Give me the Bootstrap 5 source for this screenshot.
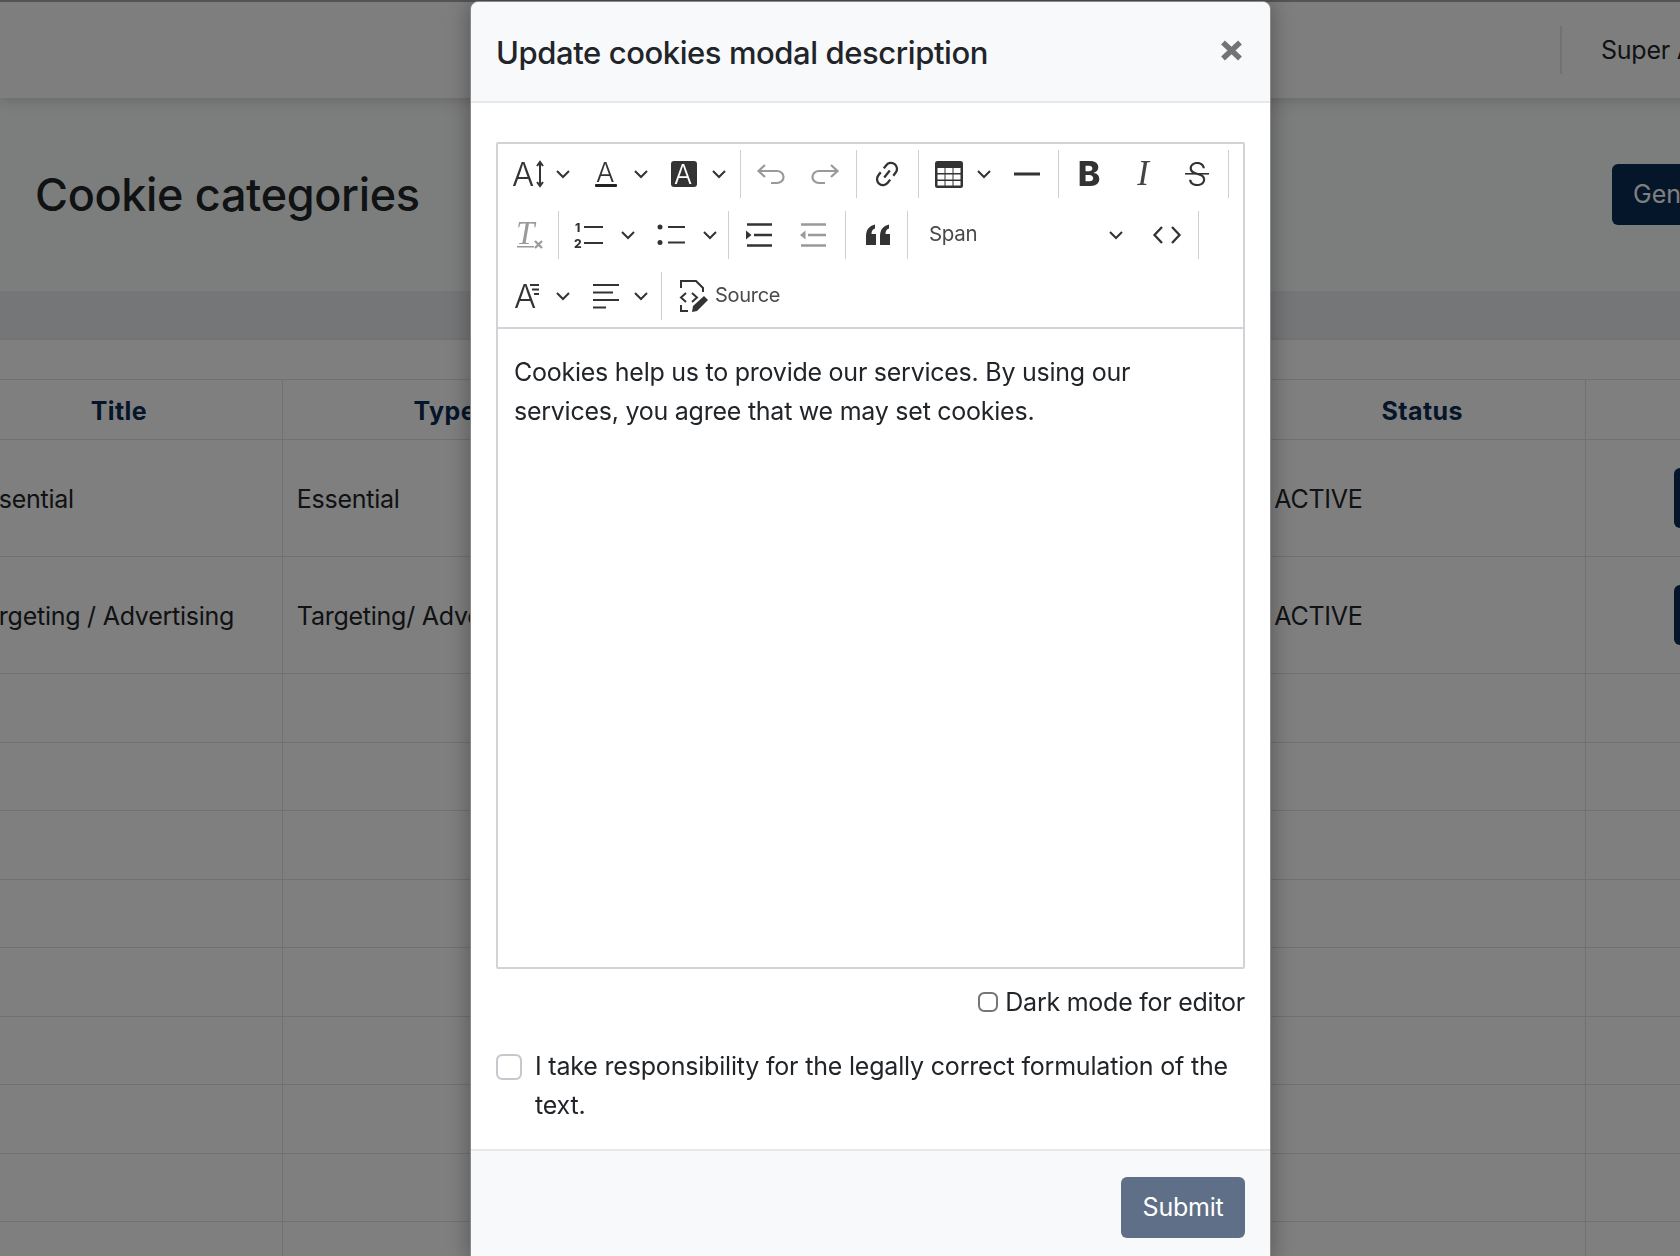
<!DOCTYPE html>
<html lang="en">
<head>
    <meta charset="UTF-8">
    <meta name="viewport" content="width=device-width, initial-scale=1.0">
    <title>Cookie categories</title>
    <link href="https://cdn.jsdelivr.net/npm/bootstrap@5.3.0/dist/css/bootstrap.min.css" rel="stylesheet">
    <style>
        html, body { height: 1256px; overflow: hidden; }
        body { font-family: "Inter", sans-serif; font-size: 25px; letter-spacing: -.25px; line-height: 38.5px; color: #212529; }

        /* page behind the modal */
        .page-wrap { width: 1960px; }
        .top-bar { height: 98px; background: #fcfdfd; border-top: 2px solid #a8a8a8; box-shadow: 0 2px 14px rgba(0,0,0,.18); position: relative; padding-right: 199px; }
        .top-line { border-left: 2px solid #e3e5e7; height: 48px; margin-right: 39px; }
        .user-name { width: 160px; }
        .page-head { height: 193px; background: #f9fafa; padding-left: 35px; padding-right: 108px; }
        .page-head h1 { font-size: 45px; font-weight: 500; margin: 0; line-height: 1.2; letter-spacing: -.35px; }
        .btn-gen { background: #0a2a54; color: #fff; font-size: 25px; height: 61px; padding: 0 0 0 21px; width: 240px; border-radius: 6px; border: 0; text-align: left; }
        .page-band { height: 49px; background: #ebecf0; border-bottom: 2px solid #e4e5e8; }
        .table-wrap { padding-top: 39px; margin-left: -44px; }
        .cat-table { table-layout: fixed; width: 1956px; font-size: 25px; margin: 0; }
        .cat-table th, .cat-table td { padding: 0 15px 0 14px; vertical-align: middle; border-color: #dee2e6; }
        .cat-table th { height: 60px; padding-top: 4px; color: #0a2a54; text-align: center; font-weight: 700; letter-spacing: .4px; }
        .cat-table .row-full td { height: 117px; padding-top: 3px; }
        .cat-table .row-empty td { height: 68.5px; }
        .btn-row { background: #0a2a54; width: 148px; height: 60px; border: 0; border-radius: 6px; margin-top: 6px; }

        /* modal */
        .cookie-dialog { max-width: none; width: 801px; margin: 1px 0 0 470px; }
        .cookie-dialog .modal-content { border: 1px solid #8a8a8a; border-radius: 8px 8px 0 0; box-shadow: 0 0 24px rgba(0,0,0,.35); }
        .cookie-dialog .modal-header { height: 101px; padding: 2px 25px 0; background: #f8f9fa; border-bottom: 2px solid #e6e8ea; }
        .cookie-dialog .modal-title { font-size: 31px; font-weight: 500; line-height: 1.2; letter-spacing: -.42px; }
        .close-x { width: 23px; height: 21px; background: none; border: 0; padding: 0; margin: -4px 2px 0 auto; line-height: 0; }
        .cookie-dialog .modal-body { padding: 39px 25px 0; }
        .cookie-dialog .modal-footer { height: 113px; align-items: flex-start; padding: 26px 25px 25px; background: #f8f9fa; border-top: 2px solid #e6e8ea; }
        .btn-submit { background: #5f6f87; border: 0; color: #fff; font-size: 25px; letter-spacing: -.25px; width: 124px; height: 61px; border-radius: 6px; margin: 0; padding: 0; }

        /* editor */
        .editor-box { border: 2px solid #d2d3d6; border-radius: 2px; height: 827px; }
        .tb { border-bottom: 2px solid #d2d3d6; height: 186px; padding-left: 2px; }
        .tb-row { height: 61px; }
        .tb-row-first { margin-top: -1px; }
        .tb-btn { width: 54px; height: 48px; flex: none; }
        .tb-caret { width: 16px; height: 48px; flex: none; }
        .tb-caret-w { width: 24px; height: 48px; flex: none; }
        .tb-sep { width: 1px; height: 48px; background: #cfcfd2; flex: none; margin: 0 3px 0 4px; }
        .tb-sep-l { margin-left: 5px; }
        .tb-sep-m { margin-left: 6px; }
        .tb-sep-xl { margin-left: 13px; }
        .tb-sep-src { margin-left: 12px; }
        .tb-start { padding-left: 1px; }
        .tb-span { width: 229px; padding-left: 18px; padding-right: 16px; font-size: 20.5px; letter-spacing: -.3px; color: #4a4a4a; height: 48px; flex: none; }
        .tb-src { font-size: 20px; letter-spacing: -.3px; color: #4a4a4a; gap: 5px; padding-left: 13px; height: 48px; }
        .tb svg text { font-family: "Inter", sans-serif; letter-spacing: 0; }
        .editor-text { height: 637px; padding: 24px 16px 0; }

        .dark-check { height: 68px; padding-bottom: 2px; gap: 7px; }
        .dark-check input { width: 20px; height: 20px; margin: 0; border: 2px solid #767676; border-radius: 4px; }
        .legal-check { margin-top: 10px; gap: 13px; }
        .legal-check input { width: 26px; height: 26px; flex: none; margin: 7px 0 0; border: 2px solid #c5c9ce; border-radius: 6px; }
        .legal-check label { line-height: 38.5px; letter-spacing: -.19px; }
        .legal-wrap { height: 102px; }
    </style>
</head>
<body>
    <div class="page-wrap">
        <div class="top-bar d-flex align-items-center justify-content-end">
            <div class="top-line"></div>
            <div class="user-name text-nowrap">Super Admin</div>
        </div>
        <div class="page-head d-flex align-items-center justify-content-between">
            <h1>Cookie categories</h1>
            <button class="btn-gen text-nowrap">Generate</button>
        </div>
        <div class="page-band"></div>
        <div class="table-wrap">
            <table class="table table-bordered cat-table">
                <thead>
                    <tr><th>Title</th><th>Type</th><th></th><th></th><th>Status</th><th></th></tr>
                </thead>
                <tbody id="cat-rows"></tbody>
            </table>
        </div>
    </div>

    <div class="modal-backdrop show"></div>

    <div class="modal d-block">
        <div class="modal-dialog cookie-dialog">
            <div class="modal-content">
                <div class="modal-header">
                    <h5 class="modal-title">Update cookies modal description</h5>
                    <button type="button" class="close-x" aria-label="Close">
                        <svg width="23" height="21" viewBox="0 0 23 21"><path d="M3 2.5 20 18.5M20 2.5 3 18.5" stroke="#737373" stroke-width="5.5" fill="none"/></svg>
                    </button>
                </div>
                <div class="modal-body">
                    <div class="editor-box">
                        <div class="tb">
                            <!-- row 1 -->
                            <div class="tb-row tb-row-first d-flex align-items-center tb-start">
                                <span class="tb-btn d-flex align-items-center justify-content-center">
                                    <svg width="34" height="34" viewBox="0 0 34 34"><text x="1" y="29" font-size="33" font-weight="300" fill="#333">A</text><path d="M29 6V28M26 9l3-4 3 4M26 25l3 4 3-4" stroke="#333" stroke-width="2" fill="none"/></svg>
                                </span>
                                <span class="tb-caret d-flex align-items-center justify-content-center"><svg width="16" height="10" viewBox="0 0 16 10"><path d="M2 2l6 6 6-6" stroke="#333" stroke-width="2" fill="none"/></svg></span>
                                <span class="tb-btn ms-2 d-flex align-items-center justify-content-center">
                                    <svg width="34" height="34" viewBox="0 0 34 34"><text x="7" y="25" font-size="27.5" font-weight="300" fill="#333">A</text><rect x="6" y="27" width="22" height="3" rx="1" fill="#222"/></svg>
                                </span>
                                <span class="tb-caret d-flex align-items-center justify-content-center"><svg width="16" height="10" viewBox="0 0 16 10"><path d="M2 2l6 6 6-6" stroke="#333" stroke-width="2" fill="none"/></svg></span>
                                <span class="tb-btn ms-2 d-flex align-items-center justify-content-center">
                                    <svg width="34" height="34" viewBox="0 0 34 34"><rect x="4" y="4" width="26" height="26" rx="3" fill="#333"/><text x="7" y="27" font-size="27" font-weight="300" fill="#fff">A</text></svg>
                                </span>
                                <span class="tb-caret d-flex align-items-center justify-content-center"><svg width="16" height="10" viewBox="0 0 16 10"><path d="M2 2l6 6 6-6" stroke="#333" stroke-width="2" fill="none"/></svg></span>
                                <span class="tb-sep tb-sep-xl"></span>
                                <span class="tb-btn d-flex align-items-center justify-content-center">
                                    <svg width="34" height="34" viewBox="0 0 34 34"><path d="M11 8 4.5 14 11 20M5 14H23a6 5.5 0 0 1 0 12H17" stroke="#999" stroke-width="2.2" fill="none"/></svg>
                                </span>
                                <span class="tb-btn d-flex align-items-center justify-content-center">
                                    <svg width="34" height="34" viewBox="0 0 34 34"><path d="M23 8 29.5 14 23 20M29 14H11a6 5.5 0 0 0 0 12H17" stroke="#999" stroke-width="2.2" fill="none"/></svg>
                                </span>
                                <span class="tb-sep"></span>
                                <span class="tb-btn d-flex align-items-center justify-content-center">
                                    <svg width="34" height="34" viewBox="0 0 34 34"><g transform="rotate(38 17 17)" fill="none" stroke="#333" stroke-width="2.300"><path d="M11 14.500V10.500a6 6 0 0 1 12 0V14.500"/><path d="M11 19.500V23.500a6 6 0 0 0 12 0V19.500"/><path d="M17 12.500V21.500"/></g></svg>
                                </span>
                                <span class="tb-sep"></span>
                                <span class="tb-btn d-flex align-items-center justify-content-center">
                                    <svg width="34" height="34" viewBox="0 0 34 34"><rect x="3" y="4" width="28" height="27" rx="2.5" fill="#333"/><g fill="#fff"><rect x="5.500" y="11" width="7" height="5"/><rect x="13.500" y="11" width="7" height="5"/><rect x="21.500" y="11" width="7" height="5"/><rect x="5.500" y="17.500" width="7" height="5"/><rect x="13.500" y="17.500" width="7" height="5"/><rect x="21.500" y="17.500" width="7" height="5"/><rect x="5.500" y="24" width="7" height="4.500"/><rect x="13.500" y="24" width="7" height="4.500"/><rect x="21.500" y="24" width="7" height="4.500"/></g></svg>
                                </span>
                                <span class="tb-caret d-flex align-items-center justify-content-center"><svg width="16" height="10" viewBox="0 0 16 10"><path d="M2 2l6 6 6-6" stroke="#333" stroke-width="2" fill="none"/></svg></span>
                                <span class="tb-btn ms-2 d-flex align-items-center justify-content-center">
                                    <svg width="34" height="34" viewBox="0 0 34 34"><rect x="4" y="15.500" width="26" height="3" fill="#333"/></svg>
                                </span>
                                <span class="tb-sep"></span>
                                <span class="tb-btn d-flex align-items-center justify-content-center">
                                    <svg width="34" height="34" viewBox="0 0 34 34"><text x="17" y="29" text-anchor="middle" font-size="34" font-weight="800" fill="#333">B</text></svg>
                                </span>
                                <span class="tb-btn d-flex align-items-center justify-content-center">
                                    <svg width="34" height="34" viewBox="0 0 34 34"><text x="17" y="28" text-anchor="middle" font-size="35" font-style="italic" fill="#444" style="font-family:'Liberation Serif',serif">I</text></svg>
                                </span>
                                <span class="tb-btn d-flex align-items-center justify-content-center">
                                    <svg width="34" height="34" viewBox="0 0 34 34"><text x="17" y="29" text-anchor="middle" font-size="32" font-weight="300" fill="#333">S</text><rect x="5" y="16" width="24" height="1.600" fill="#333"/></svg>
                                </span>
                                <span class="tb-sep"></span>
                            </div>
                            <!-- row 2 -->
                            <div class="tb-row d-flex align-items-center">
                                <span class="tb-btn d-flex align-items-center justify-content-center">
                                    <svg width="34" height="34" viewBox="0 0 34 34"><text x="6" y="26" font-size="33" font-style="italic" fill="#9a9a9a" style="font-family:'Liberation Serif',serif">T</text><rect x="7" y="28" width="17" height="1.500" fill="#9a9a9a"/><path d="M25 23l7 7M32 23l-7 7" stroke="#9a9a9a" stroke-width="2.2"/></svg>
                                </span>
                                <span class="tb-sep"></span>
                                <span class="tb-btn d-flex align-items-center justify-content-center">
                                    <svg width="34" height="34" viewBox="0 0 34 34"><text x="3" y="14" font-size="12" font-weight="800" fill="#333">1</text><text x="2" y="30" font-size="12" font-weight="800" fill="#333">2</text><path d="M12 9H31M12 25H31" stroke="#333" stroke-width="2.200"/></svg>
                                </span>
                                <span class="tb-caret-w d-flex align-items-center justify-content-center"><svg width="16" height="10" viewBox="0 0 16 10"><path d="M2 2l6 6 6-6" stroke="#333" stroke-width="2" fill="none"/></svg></span>
                                <span class="tb-btn ms-1 d-flex align-items-center justify-content-center">
                                    <svg width="34" height="34" viewBox="0 0 34 34"><circle cx="6" cy="9" r="2.500" fill="#333"/><circle cx="6" cy="24.500" r="2.500" fill="#333"/><path d="M14 9H31M14 24.500H31" stroke="#333" stroke-width="2.200"/></svg>
                                </span>
                                <span class="tb-caret-w d-flex align-items-center justify-content-center"><svg width="16" height="10" viewBox="0 0 16 10"><path d="M2 2l6 6 6-6" stroke="#333" stroke-width="2" fill="none"/></svg></span>
                                <span class="tb-sep tb-sep-m"></span>
                                <span class="tb-btn d-flex align-items-center justify-content-center">
                                    <svg width="34" height="34" viewBox="0 0 34 34"><path d="M5 6.500H30M12 17H30M5 27.500H30" stroke="#333" stroke-width="2.500"/><path d="M4 12.500V21.500L9.500 17Z" fill="#333"/></svg>
                                </span>
                                <span class="tb-btn d-flex align-items-center justify-content-center">
                                    <svg width="34" height="34" viewBox="0 0 34 34"><path d="M5 6.500H30M12 17H30M5 27.500H30" stroke="#999" stroke-width="2.500"/><path d="M9.500 12.500V21.500L4 17Z" fill="#999"/></svg>
                                </span>
                                <span class="tb-sep tb-sep-l"></span>
                                <span class="tb-btn d-flex align-items-center justify-content-center">
                                    <svg width="34" height="34" viewBox="0 0 34 34"><path d="M7 27V18C7 12 10 8 16 6.500V10.500C13.500 11.500 12.500 13 12.500 16H17V27ZM21 27V18C21 12 24 8 30 6.500V10.500C27.500 11.500 26.500 13 26.500 16H31V27Z" fill="#333"/></svg>
                                </span>
                                <span class="tb-sep"></span>
                                <span class="tb-span d-flex align-items-center justify-content-between">
                                    Span
                                    <svg width="16" height="10" viewBox="0 0 16 10"><path d="M2 2l6 6 6-6" stroke="#333" stroke-width="2" fill="none"/></svg>
                                </span>
                                <span class="tb-btn d-flex align-items-center justify-content-center">
                                    <svg width="34" height="34" viewBox="0 0 34 34"><path d="M12 9 4.500 17 12 25M22 9 29.500 17 22 25" stroke="#333" stroke-width="2.300" fill="none"/></svg>
                                </span>
                                <span class="tb-sep"></span>
                            </div>
                            <!-- row 3 -->
                            <div class="tb-row d-flex align-items-center tb-start">
                                <span class="tb-btn d-flex align-items-center justify-content-center">
                                    <svg width="34" height="34" viewBox="0 0 34 34"><text x="3" y="29" font-size="33" font-weight="300" fill="#333">A</text><path d="M19 6H28M21 10.500H28M23 15H28" stroke="#333" stroke-width="2"/></svg>
                                </span>
                                <span class="tb-caret d-flex align-items-center justify-content-center"><svg width="16" height="10" viewBox="0 0 16 10"><path d="M2 2l6 6 6-6" stroke="#333" stroke-width="2" fill="none"/></svg></span>
                                <span class="tb-btn ms-2 d-flex align-items-center justify-content-center">
                                    <svg width="34" height="34" viewBox="0 0 34 34"><path d="M4 6H30M4 13.500H24M4 21H30M4 28.500H17" stroke="#333" stroke-width="2.200"/></svg>
                                </span>
                                <span class="tb-caret d-flex align-items-center justify-content-center"><svg width="16" height="10" viewBox="0 0 16 10"><path d="M2 2l6 6 6-6" stroke="#333" stroke-width="2" fill="none"/></svg></span>
                                <span class="tb-sep tb-sep-src"></span>
                                <span class="tb-src d-flex align-items-center">
                                    <svg width="32" height="34" viewBox="0 0 32 34"><path d="M3 9V2H18L25 9V13M3 26V32H10" stroke="#333" stroke-width="2" fill="none"/><path d="M8 14 3 18.500 8 23M14 14 19 18.500 14 23" stroke="#333" stroke-width="2" fill="none"/><path d="M14 33 15 27 26 17 30 21 19 32Z" fill="#333"/></svg>
                                    Source
                                </span>
                            </div>
                        </div>
                        <div class="editor-text">Cookies help us to provide our services. By using our services, you agree that we may set cookies.</div>
                    </div>
                    <div class="dark-check d-flex align-items-center justify-content-end">
                        <input type="checkbox" class="form-check-input" id="darkMode">
                        <label for="darkMode">Dark mode for editor</label>
                    </div>
                    <div class="legal-wrap">
                        <div class="legal-check d-flex">
                            <input type="checkbox" class="form-check-input" id="legalOk">
                            <label for="legalOk">I take responsibility for the legally correct formulation of the text.</label>
                        </div>
                    </div>
                </div>
                <div class="modal-footer">
                    <button type="button" class="btn-submit">Submit</button>
                </div>
            </div>
        </div>
    </div>

    <script src="https://cdn.jsdelivr.net/npm/bootstrap@5.3.0/dist/js/bootstrap.bundle.min.js"></script>
    <script>
        const rows = document.getElementById('cat-rows');
        const cats = [
            ['Essential', 'Essential'],
            ['Targeting / Advertising', 'Targeting/ Advertising']
        ];
        cats.forEach(c => {
            rows.innerHTML += `<tr class="row-full"><td>${c[0]}</td><td class="text-nowrap overflow-hidden">${c[1]}</td><td></td><td></td><td>ACTIVE</td><td class="text-center"><button class="btn-row"></button></td></tr>`;
        });
        for (let i = 0; i < 10; i++) {
            rows.innerHTML += '<tr class="row-empty"><td></td><td></td><td></td><td></td><td></td><td></td></tr>';
        }
    </script>
</body>
</html>
